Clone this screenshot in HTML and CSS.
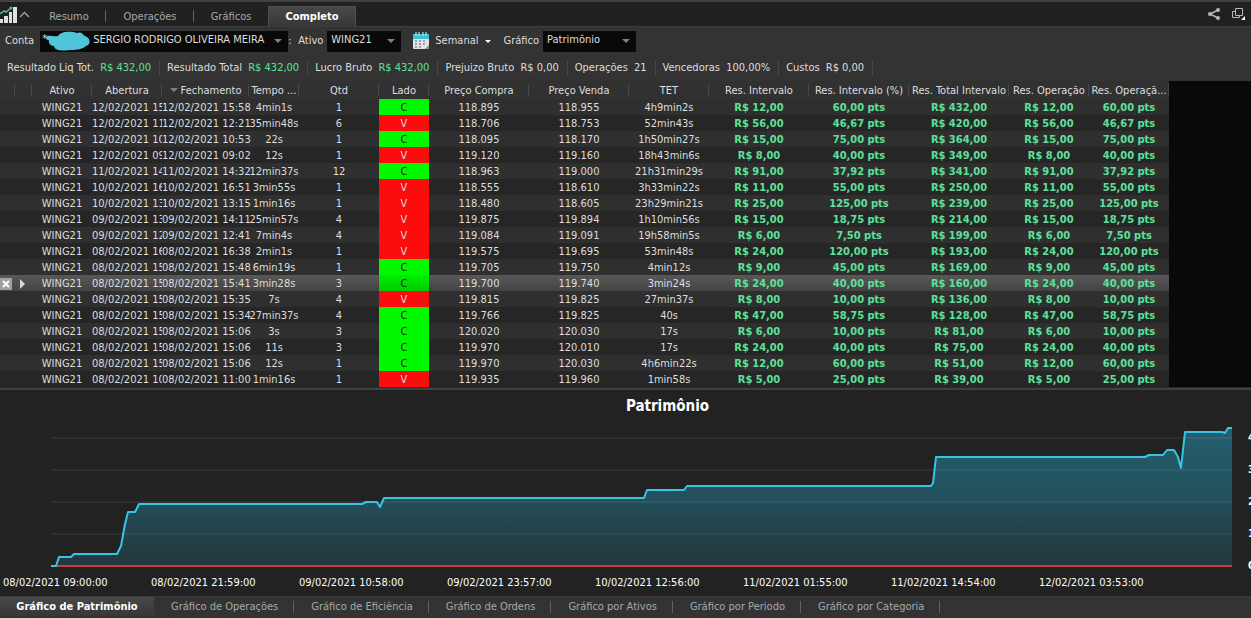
FILE: index.html
```html
<!DOCTYPE html>
<html lang='pt-BR'>
<head>
<meta charset='UTF-8'>
<title>Relatório de Performance</title>
<link rel="stylesheet" href="styles.css">
</head>
<body>

<header class='topbar'>
<svg class='logo' width='32' height='22' viewBox='0 0 32 22'>
<g fill='#e0e0e0'>
<rect x='0' y='17' width='3' height='4'/>
<rect x='4' y='14' width='4' height='7'/>
<rect x='9' y='10' width='3' height='11'/>
<rect x='13' y='5' width='4' height='16'/>
</g>
<path d='M0 12 L4 9 L6 10 L11 6' fill='none' stroke='#4fb89a' stroke-width='1.500'/>
<circle cx='11' cy='6' r='1.500' fill='#4fb89a'/>
<path d='M20 15 L24.500 10.500 L29 15' fill='none' stroke='#9a9a9a' stroke-width='1.500'/>
</svg>
<nav class='tabs top-tabs'>
<button>Resumo</button>
<button>Operações</button>
<button>Gráficos</button>
<button class='active'>Completo</button>
</nav>
<div class='window-icons'>
<svg width='14' height='14' viewBox='0 0 14 14'>
<path d='M11 3 L3 7 L11 11' fill='none' stroke='#b8b8b8' stroke-width='1.500'/>
<g fill='#b8b8b8'><circle cx='11' cy='3' r='2'/><circle cx='3' cy='7' r='2'/><circle cx='11' cy='11' r='2'/></g>
</svg>
<svg width='14' height='14' viewBox='0 0 14 14'>
<path d='M4.500 1.500 H11.500 V8.500 H4.500 Z M4.500 4.500 H1.500 V10.500 H8.500 V8.500' fill='none' stroke='#b8b8b8'/>
<path d='M14 9 V13 H10 Z' fill='#fff'/>
</svg>
</div>
</header>

<div class='toolbar'>
<label for='conta'>Conta</label>
<div class='combo combo-conta'>
<select id='conta'><option>SERGIO RODRIGO OLIVEIRA MEIRA</option></select>
<span class='star'>*</span>
<svg class='blob' width='46' height='20' viewBox='0 0 46 20'>
<path d='M1 6 C3 3 8 6 13 5 C16 0 26 0 32 2 C37 0 38 4 40 5 C46 7 46 14 41 15 C38 18 32 19 25 19 C17 20 10 20 9 15 C5 15 3 11 4 9 C2 9 0 8 1 6 Z' fill='#4fc4da'/>
</svg>
</div>
<span class='colon'>:</span>
<label for='ativo'>Ativo</label>
<div class='combo combo-ativo'>
<select id='ativo'><option>WING21</option></select>
</div>
<button class='period'>
<svg width='16' height='18' viewBox='0 0 16 18'>
<rect x='0' y='3' width='16' height='14' rx='1' fill='#e4e4e4'/>
<rect x='0' y='2' width='16' height='5' fill='#35c3d6'/>
<path d='M3 0 V4 M6 0 V4 M10 0 V4 M13 0 V4' stroke='#d8f4f8'/>
<path d='M2 9 H4 M6 9 H8 M10 9 H12 M2 12 H4 M6 12 H8 M10 12 H12 M2 15 H4 M6 15 H8' stroke='#a0a0a0' stroke-width='2'/>
<path d='M16 13 V17 H12 Z' fill='#8a8a8a'/>
</svg>
<span>Semanal</span>
<i class='caret'></i>
</button>
<label for='grafico'>Gráfico</label>
<div class='combo combo-grafico'>
<select id='grafico'><option>Patrimônio</option></select>
</div>
</div>

<div class='stats'>
<div>Resultado Liq Tot. <b class='gain'>R$ 432,00</b></div>
<div>Resultado Total <b class='gain'>R$ 432,00</b></div>
<div>Lucro Bruto <b class='gain'>R$ 432,00</b></div>
<div>Prejuizo Bruto <b>R$ 0,00</b></div>
<div>Operações <b>21</b></div>
<div>Vencedoras <b>100,00%</b></div>
<div>Custos <b>R$ 0,00</b></div>
</div>

<main class='grid-area'>
<table class='trades'>
<colgroup>
<col class='w-mark'><col class='w-arrow'><col class='w-ativo'><col class='w-abertura'><col class='w-fechamento'><col class='w-50'><col class='w-80'><col class='w-50'><col class='w-100'><col class='w-100'><col class='w-80'><col class='w-100'><col class='w-100'><col class='w-100'><col class='w-80'><col class='w-80'>
</colgroup>
<thead>
<tr><th></th><th></th><th>Ativo</th><th>Abertura</th><th><i class='caret sort'></i>Fechamento</th><th>Tempo ...</th><th>Qtd</th><th>Lado</th><th>Preço Compra</th><th>Preço Venda</th><th>TET</th><th>Res. Intervalo</th><th>Res. Intervalo (%)</th><th>Res. Total Intervalo</th><th>Res. Operação</th><th>Res. Operaçã...</th></tr>
</thead>
<tbody>
<tr><td></td><td></td><td>WING21</td><td>12/02/2021 15</td><td>12/02/2021 15:58</td><td>4min1s</td><td>1</td><td class='buy'>C</td><td>118.895</td><td>118.955</td><td>4h9min2s</td><td>R$ 12,00</td><td>60,00 pts</td><td>R$ 432,00</td><td>R$ 12,00</td><td>60,00 pts</td></tr>
<tr><td></td><td></td><td>WING21</td><td>12/02/2021 11</td><td>12/02/2021 12:21</td><td>35min48s</td><td>6</td><td class='sell'>V</td><td>118.706</td><td>118.753</td><td>52min43s</td><td>R$ 56,00</td><td>46,67 pts</td><td>R$ 420,00</td><td>R$ 56,00</td><td>46,67 pts</td></tr>
<tr><td></td><td></td><td>WING21</td><td>12/02/2021 10</td><td>12/02/2021 10:53</td><td>22s</td><td>1</td><td class='buy'>C</td><td>118.095</td><td>118.170</td><td>1h50min27s</td><td>R$ 15,00</td><td>75,00 pts</td><td>R$ 364,00</td><td>R$ 15,00</td><td>75,00 pts</td></tr>
<tr><td></td><td></td><td>WING21</td><td>12/02/2021 09</td><td>12/02/2021 09:02</td><td>12s</td><td>1</td><td class='sell'>V</td><td>119.120</td><td>119.160</td><td>18h43min6s</td><td>R$ 8,00</td><td>40,00 pts</td><td>R$ 349,00</td><td>R$ 8,00</td><td>40,00 pts</td></tr>
<tr><td></td><td></td><td>WING21</td><td>11/02/2021 14</td><td>11/02/2021 14:32</td><td>12min37s</td><td>12</td><td class='buy'>C</td><td>118.963</td><td>119.000</td><td>21h31min29s</td><td>R$ 91,00</td><td>37,92 pts</td><td>R$ 341,00</td><td>R$ 91,00</td><td>37,92 pts</td></tr>
<tr><td></td><td></td><td>WING21</td><td>10/02/2021 16</td><td>10/02/2021 16:51</td><td>3min55s</td><td>1</td><td class='sell'>V</td><td>118.555</td><td>118.610</td><td>3h33min22s</td><td>R$ 11,00</td><td>55,00 pts</td><td>R$ 250,00</td><td>R$ 11,00</td><td>55,00 pts</td></tr>
<tr><td></td><td></td><td>WING21</td><td>10/02/2021 13</td><td>10/02/2021 13:15</td><td>1min16s</td><td>1</td><td class='sell'>V</td><td>118.480</td><td>118.605</td><td>23h29min21s</td><td>R$ 25,00</td><td>125,00 pts</td><td>R$ 239,00</td><td>R$ 25,00</td><td>125,00 pts</td></tr>
<tr><td></td><td></td><td>WING21</td><td>09/02/2021 13</td><td>09/02/2021 14:11</td><td>25min57s</td><td>4</td><td class='sell'>V</td><td>119.875</td><td>119.894</td><td>1h10min56s</td><td>R$ 15,00</td><td>18,75 pts</td><td>R$ 214,00</td><td>R$ 15,00</td><td>18,75 pts</td></tr>
<tr><td></td><td></td><td>WING21</td><td>09/02/2021 12</td><td>09/02/2021 12:41</td><td>7min4s</td><td>4</td><td class='sell'>V</td><td>119.084</td><td>119.091</td><td>19h58min5s</td><td>R$ 6,00</td><td>7,50 pts</td><td>R$ 199,00</td><td>R$ 6,00</td><td>7,50 pts</td></tr>
<tr><td></td><td></td><td>WING21</td><td>08/02/2021 16</td><td>08/02/2021 16:38</td><td>2min1s</td><td>1</td><td class='sell'>V</td><td>119.575</td><td>119.695</td><td>53min48s</td><td>R$ 24,00</td><td>120,00 pts</td><td>R$ 193,00</td><td>R$ 24,00</td><td>120,00 pts</td></tr>
<tr><td></td><td></td><td>WING21</td><td>08/02/2021 15</td><td>08/02/2021 15:48</td><td>6min19s</td><td>1</td><td class='buy'>C</td><td>119.705</td><td>119.750</td><td>4min12s</td><td>R$ 9,00</td><td>45,00 pts</td><td>R$ 169,00</td><td>R$ 9,00</td><td>45,00 pts</td></tr>
<tr class='selected'><td><button class='close' aria-label='Fechar'><svg width='12' height='12' viewBox='0 0 12 12'><path d='M3 3 L9 9 M9 3 L3 9' stroke='#fff' stroke-width='2'/></svg></button></td><td><i class='pointer'></i></td><td>WING21</td><td>08/02/2021 15</td><td>08/02/2021 15:41</td><td>3min28s</td><td>3</td><td class='buy'>C</td><td>119.700</td><td>119.740</td><td>3min24s</td><td>R$ 24,00</td><td>40,00 pts</td><td>R$ 160,00</td><td>R$ 24,00</td><td>40,00 pts</td></tr>
<tr><td></td><td></td><td>WING21</td><td>08/02/2021 15</td><td>08/02/2021 15:35</td><td>7s</td><td>4</td><td class='sell'>V</td><td>119.815</td><td>119.825</td><td>27min37s</td><td>R$ 8,00</td><td>10,00 pts</td><td>R$ 136,00</td><td>R$ 8,00</td><td>10,00 pts</td></tr>
<tr><td></td><td></td><td>WING21</td><td>08/02/2021 15</td><td>08/02/2021 15:34</td><td>27min37s</td><td>4</td><td class='buy'>C</td><td>119.766</td><td>119.825</td><td>40s</td><td>R$ 47,00</td><td>58,75 pts</td><td>R$ 128,00</td><td>R$ 47,00</td><td>58,75 pts</td></tr>
<tr><td></td><td></td><td>WING21</td><td>08/02/2021 15</td><td>08/02/2021 15:06</td><td>3s</td><td>3</td><td class='buy'>C</td><td>120.020</td><td>120.030</td><td>17s</td><td>R$ 6,00</td><td>10,00 pts</td><td>R$ 81,00</td><td>R$ 6,00</td><td>10,00 pts</td></tr>
<tr><td></td><td></td><td>WING21</td><td>08/02/2021 15</td><td>08/02/2021 15:06</td><td>11s</td><td>3</td><td class='buy'>C</td><td>119.970</td><td>120.010</td><td>17s</td><td>R$ 24,00</td><td>40,00 pts</td><td>R$ 75,00</td><td>R$ 24,00</td><td>40,00 pts</td></tr>
<tr><td></td><td></td><td>WING21</td><td>08/02/2021 15</td><td>08/02/2021 15:06</td><td>12s</td><td>1</td><td class='buy'>C</td><td>119.970</td><td>120.030</td><td>4h6min22s</td><td>R$ 12,00</td><td>60,00 pts</td><td>R$ 51,00</td><td>R$ 12,00</td><td>60,00 pts</td></tr>
<tr><td></td><td></td><td>WING21</td><td>08/02/2021 10</td><td>08/02/2021 11:00</td><td>1min16s</td><td>1</td><td class='sell'>V</td><td>119.935</td><td>119.960</td><td>1min58s</td><td>R$ 5,00</td><td>25,00 pts</td><td>R$ 39,00</td><td>R$ 5,00</td><td>25,00 pts</td></tr>
</tbody>
</table>
</main>

<section class='chart'>
<h2>Patrimônio</h2>
<div class='plot'>
<svg viewBox='0 0 1182 146' preserveAspectRatio='none'>
<defs>
<linearGradient id='area' x1='0' y1='0' x2='0' y2='146' gradientUnits='userSpaceOnUse'>
<stop offset='0' stop-color='#245f70'/>
<stop offset='0.5' stop-color='#23505c'/>
<stop offset='1' stop-color='#24343a'/>
</linearGradient>
</defs>
<path fill='url(#area)' d='M0 142 H5 L8 133 H20 L23 130 H66 L70 122 L74 100 L77 88 H84 L88 80 H311 L315 78 H326 L329 83 L333 74 H593 L596 66 H633 L636 62 H880 L882 59 L885 33 H1094 L1098 31 H1112 L1116 26 H1123 L1127 33 L1130 44 L1134 8 H1171 L1174 9 L1177 4 H1181 V142 Z'/>
<path class='lines' d='M0 14 H1182 M0 46 H1182 M0 78 H1182 M0 110 H1182'/>
<path class='zero' d='M4 142 H1181'/>
<path class='equity' d='M0 142 H5 L8 133 H20 L23 130 H66 L70 122 L74 100 L77 88 H84 L88 80 H311 L315 78 H326 L329 83 L333 74 H593 L596 66 H633 L636 62 H880 L882 59 L885 33 H1094 L1098 31 H1112 L1116 26 H1123 L1127 33 L1130 44 L1134 8 H1171 L1174 9 L1177 4 H1181'/>
</svg>
<div class='y-axis'><span>4</span><span>3</span><span>2</span><span>1</span><span>0</span></div>
</div>
<div class='x-axis'>
<span>08/02/2021 09:00:00</span>
<span>08/02/2021 21:59:00</span>
<span>09/02/2021 10:58:00</span>
<span>09/02/2021 23:57:00</span>
<span>10/02/2021 12:56:00</span>
<span>11/02/2021 01:55:00</span>
<span>11/02/2021 14:54:00</span>
<span>12/02/2021 03:53:00</span>
</div>
</section>

<nav class='tabs bottom-tabs'>
<button class='active'>Gráfico de Patrimônio</button>
<button>Gráfico de Operações</button>
<button>Gráfico de Eficiência</button>
<button>Gráfico de Ordens</button>
<button>Gráfico por Ativos</button>
<button>Gráfico por Periodo</button>
<button>Gráfico por Categoria</button>
</nav>

</body>
</html>
```
FILE: styles.css
```css
:root {
    --panel: #333333;
    --dark: #212121;
    --line: #474747;
    --text: #dedede;
    --muted: #a8a8a8;
    --gain: #5fe09a;
    --cyan: #36c5e6;
}

* {
    box-sizing: border-box;
    margin: 0;
    padding: 0;
}

body {
    background: var(--panel);
    color: var(--text);
    font: 11px/16px Tahoma, "DejaVu Sans Condensed", "DejaVu Sans", sans-serif;
    min-height: 100vh;
    display: flex;
    flex-direction: column;
    overflow-x: hidden;
    white-space: nowrap;
}

button, select {
    font: inherit;
    color: inherit;
    border: 0;
    background: none;
    appearance: none;
}

/* Top bar */

.topbar {
    display: flex;
    height: 27px;
    background: var(--dark);
    border-top: 2px solid #404040;
    border-bottom: 1px solid #3c3c3c;
}

.tabs {
    display: flex;
    color: var(--muted);
}

.tabs button {
    position: relative;
    text-align: center;
}

.tabs button::after {
    content: '';
    position: absolute;
    right: 0;
    top: 4px;
    height: 12px;
    border-right: 1px solid #606060;
}

.tabs .active {
    background: linear-gradient(#484848, #373737);
    color: #ffffff;
    font-weight: bold;
}

.tabs .active::after {
    display: none;
}

.top-tabs {
    padding-top: 4px;
}

.top-tabs button {
    width: 74px;
    padding-top: 2px;
}

.top-tabs button:nth-child(2), .top-tabs .active {
    width: 88px;
}

.top-tabs button:nth-child(3)::after {
    display: none;
}

.top-tabs .active {
    border: 1px solid #505050;
    border-bottom: 0;
    padding-top: 0;
}

.window-icons {
    margin-left: auto;
    padding: 5px 6px;
    display: flex;
    gap: 10px;
}

/* Filters */

.toolbar {
    display: flex;
    align-items: center;
    height: 28px;
    padding-left: 5px;
}

.combo {
    position: relative;
    height: 21px;
    margin-left: 4px;
    background: #090909;
}

.combo select {
    width: 100%;
    height: 19px;
    padding-left: 4px;
}

.combo::after, .caret {
    border: 4px solid transparent;
    border-top-color: #808080;
    border-bottom: 0;
}

.combo::after {
    content: '';
    position: absolute;
    right: 6px;
    top: 8px;
    pointer-events: none;
}

.combo-conta {
    width: 248px;
    margin-left: 6px;
}

.combo-conta select {
    padding-left: 53px;
}

.combo-ativo {
    width: 74px;
}

.combo-grafico {
    width: 93px;
}

.star {
    position: absolute;
    left: 2px;
    top: 0;
}

.blob {
    position: absolute;
    left: 5px;
    top: 0;
}

.colon {
    width: 10px;
}

.period {
    display: flex;
    align-items: center;
    gap: 6px;
    margin: 0 12px;
}

.caret {
    display: inline-block;
}

.period .caret {
    border-width: 3px;
    border-bottom: 0;
    border-top-color: #ffffff;
    margin-left: 1px;
}

/* Totals */

.stats {
    display: flex;
    height: 26px;
    padding-top: 5px;
}

.stats div {
    height: 16px;
    padding: 0 8px 0 7px;
    border-right: 1px solid var(--line);
}

.stats b {
    font-weight: normal;
    margin-left: 3px;
}

.stats .gain {
    color: var(--gain);
}

/* Trades table */

.grid-area {
    background: #090909;
    border-bottom: 1px solid #2a2a2a;
}

.trades {
    width: 1169px;
    table-layout: fixed;
    border-collapse: collapse;
    background: #262626;
}

.w-mark { width: 15px; }
.w-arrow { width: 17px; }
.w-ativo { width: 60px; }
.w-abertura { width: 70px; }
.w-fechamento { width: 87px; }
.w-50 { width: 50px; }
.w-80 { width: 80px; }
.w-100 { width: 100px; }

.trades th, .trades td {
    height: 16px;
    line-height: 14px;
    padding-top: 2px;
    text-align: center;
    font-weight: normal;
}

.trades th {
    height: 18px;
    background: linear-gradient(var(--line), var(--line)) right center / 1px 12px no-repeat #313131;
}

.trades tbody tr:nth-child(odd) {
    background: #2f2f2f;
}

.trades tbody .selected {
    background: linear-gradient(#585858, #434343);
}

.trades td:nth-child(4) {
    overflow: hidden;
}

.trades td:nth-child(n+12) {
    color: var(--gain);
    font-weight: bold;
}

.trades .buy {
    background: #00f800;
    color: #202020;
}

.trades .sell {
    background: #fc0c0c;
}

.trades .selected .buy {
    background: linear-gradient(#00ee00, #00cc00);
}

.sort {
    margin: 0 3px 2px 0;
}

.close {
    display: block;
    width: 12px;
    height: 12px;
    background: #a0a0a0;
}

.close svg {
    display: block;
}

.pointer {
    display: block;
    width: 5px;
    margin-left: 5px;
    border: 5px solid transparent;
    border-left-color: #d8d8d8;
    border-right: 0;
}

/* Equity chart */

.chart {
    flex: 1;
    background: #222222;
    border-top: 2px solid #404040;
}

.chart h2 {
    font-size: 15px;
    line-height: 20px;
    height: 34px;
    padding: 6px 0 0 84px;
    text-align: center;
    color: #ffffff;
}

.plot {
    display: flex;
    padding-left: 51px;
}

.plot svg {
    flex: 1;
    min-width: 0;
    height: 146px;
}

.plot path {
    vector-effect: non-scaling-stroke;
}

.lines {
    stroke: #ffffff;
    stroke-opacity: 0.12;
}

.zero {
    stroke: #cc3c3c;
    stroke-width: 2px;
}

.equity {
    fill: none;
    stroke: var(--cyan);
    stroke-width: 2px;
    stroke-linejoin: round;
}

.y-axis {
    width: 18px;
    padding: 6px 0 0 15px;
    overflow: hidden;
    color: #ffffff;
    font-weight: bold;
}

.y-axis span {
    display: block;
    height: 32px;
}

.y-axis span:last-child {
    height: 16px;
}

.x-axis {
    display: grid;
    grid-template-columns: repeat(8, 37fr) 16fr;
    padding: 2px 0 0 3px;
    line-height: 14px;
    color: #ffffff;
}

.bottom-tabs {
    height: 22px;
    padding-bottom: 2px;
    border-top: 1px solid #3c3c3c;
}

.bottom-tabs button {
    padding: 1px 16px 0 17px;
}

.bottom-tabs .active {
    width: 154px;
    padding: 1px 0 0;
}
```
